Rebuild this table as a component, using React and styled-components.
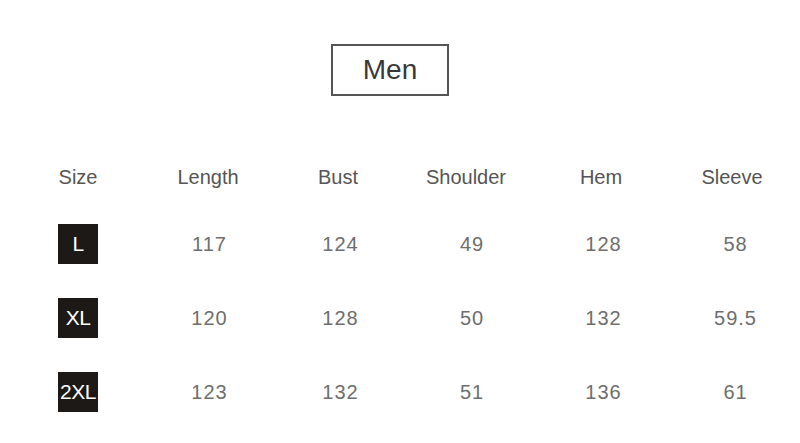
import React from 'react';
import styled, { createGlobalStyle } from 'styled-components';

const GlobalStyle = createGlobalStyle`
  html, body {
    margin: 0;
    padding: 0;
    background: #ffffff;
  }
  body {
    font-family: "Liberation Sans", Arial, sans-serif;
  }
`;

const columns = ['Size', 'Length', 'Bust', 'Shoulder', 'Hem', 'Sleeve'];

// small nudge per value column so the numbers sit where the original has them
const valueShift = [3, 5, 12, 5, 7];

const rows = [
    { size: 'L', values: ['117', '124', '49', '128', '58'] },
    { size: 'XL', values: ['120', '128', '50', '132', '59.5'] },
    { size: '2XL', values: ['123', '132', '51', '136', '61'] },
];

export default function App() {
    return (
        <>
            <GlobalStyle />
            <Page>
                <TitleWrap>
                    <Title>Men</Title>
                </TitleWrap>

                <Table>
                    <Row>
                        {columns.map((c) => (
                            <HeadCell key={c}>{c}</HeadCell>
                        ))}
                    </Row>
                    <Body>
                        {rows.map((r) => (
                            <Row key={r.size}>
                                <Cell>
                                    <SizeBadge>{r.size}</SizeBadge>
                                </Cell>
                                {r.values.map((v, i) => (
                                    <ValueCell key={i} $shift={valueShift[i]}>
                                        {v}
                                    </ValueCell>
                                ))}
                            </Row>
                        ))}
                    </Body>
                </Table>
            </Page>
        </>
    );
}

const Page = styled.div`
  width: 800px;
  height: 443px;
  padding-top: 44px;
  box-sizing: border-box;
  overflow: hidden;
`;

const TitleWrap = styled.div`
  display: flex;
  justify-content: center;
  padding-right: 20px;
`;

const Title = styled.div`
  width: 118px;
  height: 52px;
  box-sizing: border-box;
  border: 2px solid #555;
  display: flex;
  align-items: center;
  justify-content: center;
  font-size: 28px;
  color: #383838;
`;

const Table = styled.div`
  margin-top: 61px;
  padding-left: 13px;
  display: flex;
  flex-direction: column;
`;

const Body = styled.div`
  margin-top: 27px;
  display: flex;
  flex-direction: column;
  gap: 34px;
`;

const Row = styled.div`
  display: grid;
  grid-template-columns: 130px 130px 130px 126px 144px 118px;
  height: 40px;
  align-items: center;
`;

const Cell = styled.div`
  display: flex;
  justify-content: center;
  align-items: center;
`;

const HeadCell = styled(Cell)`
  font-size: 20px;
  color: #555;
`;

const ValueCell = styled(Cell)`
  font-size: 20px;
  letter-spacing: 1px;
  color: #6e6e6e;
  padding-left: ${(p) => p.$shift}px;
`;

const SizeBadge = styled.div`
  width: 40px;
  height: 40px;
  background: #1c1917;
  color: #fff;
  font-size: 21px;
  display: flex;
  align-items: center;
  justify-content: center;
  letter-spacing: -0.5px;
`;
